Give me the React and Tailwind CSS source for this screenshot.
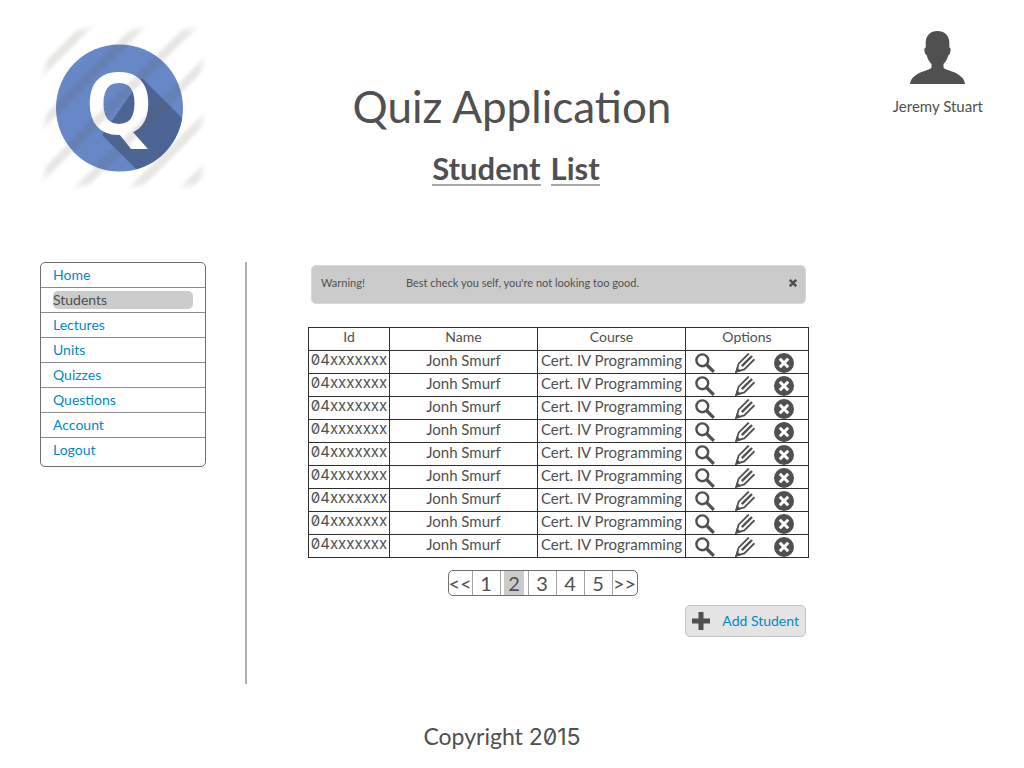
import React from "react";

const menu = ["Home", "Students", "Lectures", "Units", "Quizzes", "Questions", "Account", "Logout"];

const students = Array.from({ length: 9 }, (_, i) => ({
  key: i,
  id: "04xxxxxxx",
  name: "Jonh Smurf",
  course: "Cert. IV Programming",
}));

const pages = ["<<", "1", "2", "3", "4", "5", ">>"];

function Logo() {
  return (
    <svg viewBox="0 0 165 165" className="size-[165px]" role="img" aria-label="Quiz logo">
      <defs>
        <clipPath id="disc">
          <circle cx="78.5" cy="83" r="63.5" />
        </clipPath>
        <filter id="soft" x="-10%" y="-10%" width="120%" height="120%">
          <feGaussianBlur stdDeviation="1.4" />
        </filter>
        <filter id="fade" x="-10%" y="-10%" width="120%" height="120%">
          <feGaussianBlur stdDeviation="3" />
        </filter>
        <mask id="edge">
          <rect x="4" y="4" width="157" height="157" fill="#fff" filter="url(#fade)" />
        </mask>
      </defs>
      <circle cx="78.5" cy="83" r="63.5" fill="#6787c6" />
      <g clipPath="url(#disc)">
        <path d="M101 53 L160 112 V165 H116 L61 110 Z" fill="#4d6595" />
      </g>
      <text x="78" y="109" textAnchor="middle" fontSize="86" fontWeight="700" fill="#fff" className="font-['Open_Sans',sans-serif]">
        Q
      </text>
      <g mask="url(#edge)">
        <g filter="url(#soft)" stroke="#5a5346" strokeOpacity="0.14" strokeWidth="9">
          <path d="M-10 57 L57 -10" />
          <path d="M-10 110 L110 -10" />
          <path d="M-10 162 L162 -10" />
          <path d="M27 175 L175 27" />
          <path d="M82 175 L175 82" />
          <path d="M133 175 L175 133" />
        </g>
      </g>
    </svg>
  );
}

function UserIcon() {
  return (
    <svg viewBox="0 0 55 53" className="h-[53px] w-[55px]" fill="#505050" aria-hidden="true">
      <path d="M27.500 0C20.500 0 16 4.500 15.700 11V16.500C14.300 16.800 14.200 18.500 14.600 20.500C15 22.500 15.600 24 16.700 24.200C17.600 28 19.300 31 21.500 33V36.500C20.500 38.200 17 39 13 40.500C5.500 43.300 0.500 47.500 0 53H55C54.500 47.500 49.500 43.300 42 40.500C38 39 34.500 38.200 33.500 36.500V33C35.700 31 37.400 28 38.300 24.200C39.400 24 40 22.500 40.400 20.500C40.800 18.500 40.700 16.800 39.300 16.500V11C39 4.500 34.500 0 27.500 0Z" />
    </svg>
  );
}

function SearchIcon() {
  return (
    <svg viewBox="0 0 20 20" className="size-5" fill="none" stroke="#505050" aria-hidden="true">
      <circle cx="7.300" cy="7.300" r="5.900" strokeWidth="2.400" />
      <path d="M11.500 11.500L18.800 18.800" strokeWidth="3.200" />
    </svg>
  );
}

function PencilIcon() {
  return (
    <svg viewBox="0 0 20 20" className="size-5" fill="none" stroke="#505050" aria-hidden="true">
      <path d="M13.800 0.500L3.600 10.700L1.400 18.600L9.300 16.400L19.500 6.200" strokeWidth="1.800" />
      <path d="M17 3L6.800 13.200" strokeWidth="2.400" />
      <path d="M0 20L1.900 14L6 18.100Z" fill="#505050" stroke="none" />
    </svg>
  );
}

function DeleteIcon() {
  return (
    <svg viewBox="0 0 20 20" className="size-5" aria-hidden="true">
      <circle cx="10" cy="10" r="10" fill="#505050" />
      <path d="M5.800 5.800L14.200 14.200M14.200 5.800L5.800 14.200" stroke="#fff" strokeWidth="3" />
    </svg>
  );
}

function Header() {
  return (
    <header className="grid grid-cols-[1fr_auto_1fr] items-start px-[41px] pt-[25px]">
      <Logo />
      <div className="flex flex-col items-center pt-[55px] text-center">
        <h1 className="text-[44px] leading-[52px]">Quiz Application</h1>
        <h2 className="mt-5 flex gap-[10px] pl-2 text-[31px] leading-8 font-bold">
          <span className="border-b-2 border-[#a9a9a9]">Student</span>
          <span className="border-b-2 border-[#a9a9a9]">List</span>
        </h2>
      </div>
      <div className="flex flex-col items-center justify-self-end pt-[6px]">
        <UserIcon />
        <p className="mt-3 text-[15px] leading-5">Jeremy Stuart</p>
      </div>
    </header>
  );
}

function Sidebar() {
  return (
    <nav className="w-[166px] shrink-0 self-start" aria-label="Main">
      <ul className="divide-y divide-[#8c8c8c] rounded-[5px] border border-[#6e6e6e] pb-1">
        {menu.map((item) => (
          <li key={item} className="px-3 pt-[3px] pb-[3px]">
            <a
              href="#"
              aria-current={item === "Students" ? "page" : undefined}
              className={
                item === "Students"
                  ? "block rounded-[5px] bg-[#cbcbcb] text-[14px] leading-[18px]"
                  : "block text-[14px] leading-[18px] text-[#0088cc]"
              }
            >
              {item}
            </a>
          </li>
        ))}
      </ul>
    </nav>
  );
}

function Alert() {
  return (
    <div role="alert" className="mx-[3px] flex h-[39px] items-center rounded-[5px] border border-[#d8d8d8] bg-[#cbcbcb] pr-2 pb-1 pl-[9px] text-[11px] leading-4">
      <strong className="w-[85px] font-normal">Warning!</strong>
      <span className="flex-1">Best check you self, you're not looking too good.</span>
      <button type="button" aria-label="Dismiss" className="flex size-2">
        <svg viewBox="0 0 8 8" className="size-2" stroke="#505050" strokeWidth="2.500" aria-hidden="true">
          <path d="M0.800 0.800L7.200 7.200M7.200 0.800L0.800 7.200" />
        </svg>
      </button>
    </div>
  );
}

function StudentTable() {
  return (
    <table className="mt-[23px] w-full table-fixed border-collapse text-center text-[15px] leading-[18px]">
      <colgroup>
        <col className="w-[81px]" />
        <col />
        <col />
        <col className="w-[123px]" />
      </colgroup>
      <thead>
        <tr>
          {["Id", "Name", "Course", "Options"].map((h) => (
            <th key={h} scope="col" className="h-[23px] border border-[#2e2e2e] p-0 pb-1 text-[14px] font-normal">
              {h}
            </th>
          ))}
        </tr>
      </thead>
      <tbody>
        {students.map((s) => (
          <tr key={s.key}>
            <td className="h-[23px] border border-[#2e2e2e] p-0 pb-1 font-['Inter','Lato',sans-serif] slashed-zero">{s.id}</td>
            <td className="h-[23px] border border-[#2e2e2e] p-0 pb-1">{s.name}</td>
            <td className="h-[23px] border border-[#2e2e2e] p-0 pb-1">{s.course}</td>
            <td className="h-[23px] border border-[#2e2e2e] p-0">
              <div className="flex items-center justify-between pt-px pr-[14px] pl-[9px]">
                <button type="button" aria-label="View"><SearchIcon /></button>
                <button type="button" aria-label="Edit"><PencilIcon /></button>
                <button type="button" aria-label="Delete"><DeleteIcon /></button>
              </div>
            </td>
          </tr>
        ))}
      </tbody>
    </table>
  );
}

function Pagination() {
  return (
    <nav aria-label="Pages" className="mt-3 flex justify-center pr-8">
      <div className="flex h-[26px] divide-x divide-[#a3a3a3] overflow-hidden rounded-[5px] border border-[#6e6e6e] text-[20px] leading-6">
        {pages.map((p) => (
          <button
            key={p}
            type="button"
            aria-current={p === "2" ? "page" : undefined}
            className={p === "<<" || p === ">>" ? "w-6" : "flex w-7 justify-center"}
          >
            {p === "2" ? <span className="block w-5 bg-[#cbcbcb]">2</span> : p}
          </button>
        ))}
      </div>
    </nav>
  );
}

export default function App() {
  return (
    <div className="min-h-screen bg-white font-['Lato','Liberation_Sans',sans-serif] text-[#505050]">
      <Header />
      <main className="mt-[72px] flex px-10">
        <Sidebar />
        <div className="ml-[39px] min-h-[422px] flex-1 border-l-2 border-[#b0b0b0] pt-[3px] pl-[61px]">
          <div className="max-w-[501px]">
            <Alert />
            <StudentTable />
            <Pagination />
            <div className="mt-[9px] flex justify-end pr-[3px]">
              <button type="button" className="flex h-8 items-center gap-3 rounded-[5px] border border-[#c4c4c4] bg-[#e4e4e4] px-[6px] text-[14px] leading-5 text-[#0088cc]">
                <svg viewBox="0 0 18 18" className="size-[18px]" fill="#505050" aria-hidden="true">
                  <path d="M6.500 0H11.500V6.500H18V11.500H11.500V18H6.500V11.500H0V6.500H6.500Z" />
                </svg>
                Add Student
              </button>
            </div>
          </div>
        </div>
      </main>
      <footer className="pt-9 pr-5 text-center text-[23px] leading-8">
        Copyright <span className="font-['Inter','Lato',sans-serif] slashed-zero">2015</span>
      </footer>
    </div>
  );
}
